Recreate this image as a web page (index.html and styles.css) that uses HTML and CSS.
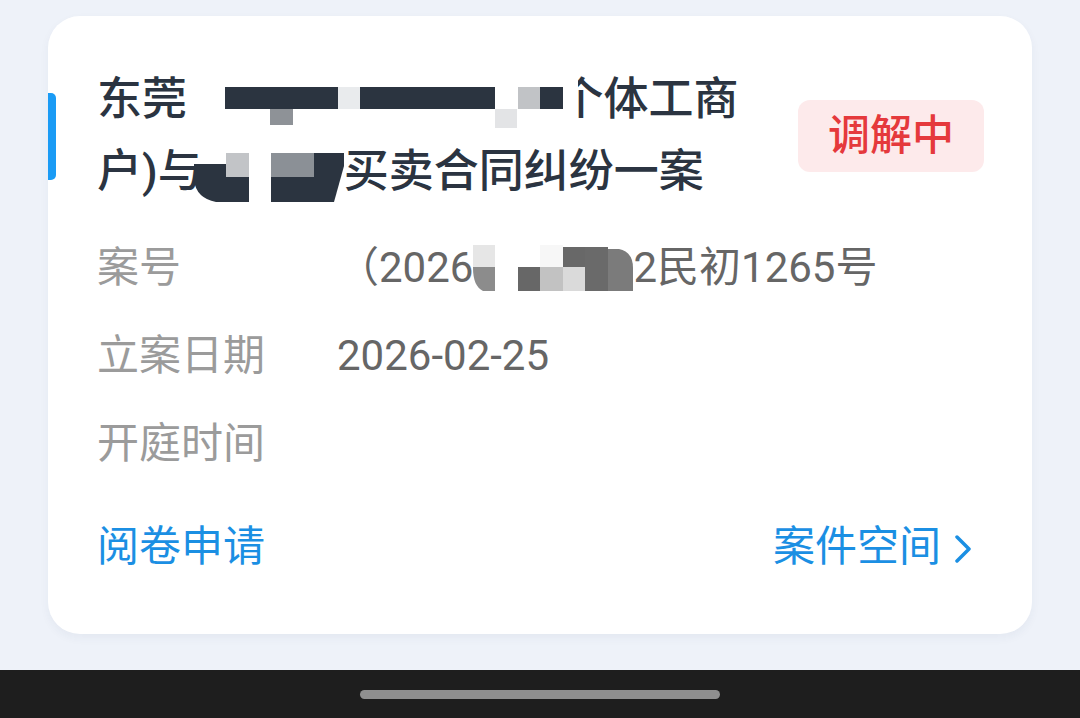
FILE: index.html
```html
<!DOCTYPE html>
<html lang="zh-CN">

<head>
  <meta charset="UTF-8" />
  <meta name="viewport" content="width=device-width, initial-scale=1.0" />
  <title>案件详情</title>
  <link rel="stylesheet" href="styles.css">
</head>

<body>
  <div class="page">
    <!-- 案件卡片 -->
    <div class="card">
      <span class="accent"></span>

      <div class="head">
        <div class="title">东莞<svg class="mask mask-a" width="415" height="72" viewBox="0 0 415 72">
            <rect x="356" y="14" width="35" height="50" fill="#fff" />
            <rect x="38" y="23" width="113" height="22" fill="#2b3440" />
            <rect x="151" y="23" width="22" height="22" fill="#e9ebed" />
            <rect x="173" y="23" width="135" height="22" fill="#2b3440" />
            <rect x="331" y="23" width="22" height="22" fill="#c1c3c6" />
            <rect x="353" y="23" width="23" height="22" fill="#2b3440" />
            <rect x="83" y="45" width="23" height="16" fill="#8e9297" />
            <rect x="308" y="45" width="22" height="19" fill="#e3e4e6" />
          </svg>(个体工商户)与<svg class="mask mask-b" width="150" height="72" viewBox="0 0 150 72">
            <path d="M0 28 H32 V66 H22 Q2 62 0 44 Z" fill="#2b3440" />
            <rect x="32" y="17" width="23" height="24" fill="#c2c4c7" />
            <rect x="32" y="41" width="23" height="25" fill="#2b3440" />
            <rect x="77" y="17" width="43" height="24" fill="#8b9096" />
            <rect x="77" y="41" width="43" height="25" fill="#2b3440" />
            <path d="M120 17 H150 V30 L140 66 H120 Z" fill="#2b3440" />
          </svg>买卖合同纠纷一案</div>
        <span class="badge">调解中</span>
      </div>

      <div class="info">
        <div class="row">
          <span class="label">案号</span>
          <span class="value">（2026<svg class="mask" width="160" height="88" viewBox="0 0 160 88">
              <path d="M8 21 H22 V67 H10 Q0 62 0 44 Q0 24 8 21 Z" fill="#8c8c8c" />
              <rect x="0" y="21" width="22" height="22" fill="#e6e6e6" />
              <rect x="45" y="43" width="22" height="24" fill="#676767" />
              <rect x="67" y="21" width="23" height="22" fill="#f7f7f7" />
              <rect x="67" y="43" width="23" height="24" fill="#c2c2c2" />
              <rect x="90" y="23" width="22" height="20" fill="#686868" />
              <rect x="90" y="43" width="22" height="24" fill="#dadada" />
              <rect x="112" y="23" width="23" height="44" fill="#6a6a6a" />
              <path d="M135 25 H146 Q160 28 160 44 V67 H135 Z" fill="#7b7b7b" />
            </svg>2民初1265号</span>
        </div>
        <div class="row">
          <span class="label">立案日期</span>
          <span class="value">2026-02-25</span>
        </div>
        <div class="row">
          <span class="label">开庭时间</span>
          <span class="value"></span>
        </div>
      </div>

      <div class="actions">
        <a class="link" href="#">阅卷申请</a>
        <a class="link link-more" href="#">案件空间
          <svg class="chevron" width="18" height="28" viewBox="0 0 18 28">
            <polyline points="3,2 15,14 3,26" fill="none" stroke="#1b8fe3" stroke-width="3.5" stroke-linecap="round" stroke-linejoin="round" />
          </svg>
        </a>
      </div>
    </div>
  </div>

  <!-- 系统导航条 -->
  <div class="navbar">
    <span class="pill"></span>
  </div>
</body>

</html>
```

FILE: styles.css
```css
body {
  margin: 0;
  font-family: Roboto, "Noto Sans CJK SC", sans-serif;
  background-color: #eef2f9;
}

.page {
  height: 670px;
  padding: 16px 48px 0;
  box-sizing: border-box;
}

.card {
  position: relative;
  background-color: #fff;
  border-radius: 32px;
  padding: 48px 48px 57px 49px;
  box-shadow: 0 4px 10px rgba(40, 60, 100, 0.05);
}

.accent {
  position: absolute;
  left: 0;
  top: 77px;
  width: 8px;
  height: 87px;
  background-color: #1a9bf5;
  border-radius: 0 5px 5px 0;
}

.head {
  display: flex;
  align-items: center;
  gap: 40px;
}

.title {
  flex: 1;
  font-size: 45px;
  line-height: 72px;
  font-weight: 500;
  color: #2b3441;
}

.mask {
  position: relative;
  z-index: 1;
  vertical-align: top;
}

.mask-a {
  margin-right: -59px;
}

.mask-b {
  margin-left: -9px;
}

.badge {
  width: 186px;
  height: 72px;
  line-height: 72px;
  text-align: center;
  font-size: 42px;
  font-weight: 500;
  color: #e5393c;
  background-color: #fdeaeb;
  border-radius: 12px;
}

.info {
  margin-top: 16px;
}

.row {
  display: flex;
  font-size: 42px;
  line-height: 88px;
  height: 88px;
}

.label {
  width: 240px;
  color: #9b9b9b;
}

.value {
  color: #666;
  white-space: nowrap;
}

.actions {
  display: flex;
  justify-content: space-between;
  margin-top: 29px;
  font-size: 42px;
  line-height: 60px;
}

.link {
  color: #1b8fe3;
  text-decoration: none;
}

.link-more {
  display: flex;
  align-items: center;
  gap: 13px;
  margin-right: 12px;
}

.chevron {
  margin-top: 4px;
}

.navbar {
  height: 48px;
  background-color: #1e1e1e;
  display: flex;
  justify-content: center;
  align-items: center;
}

.pill {
  width: 360px;
  height: 9px;
  border-radius: 5px;
  background-color: #8f8f8f;
}
```
